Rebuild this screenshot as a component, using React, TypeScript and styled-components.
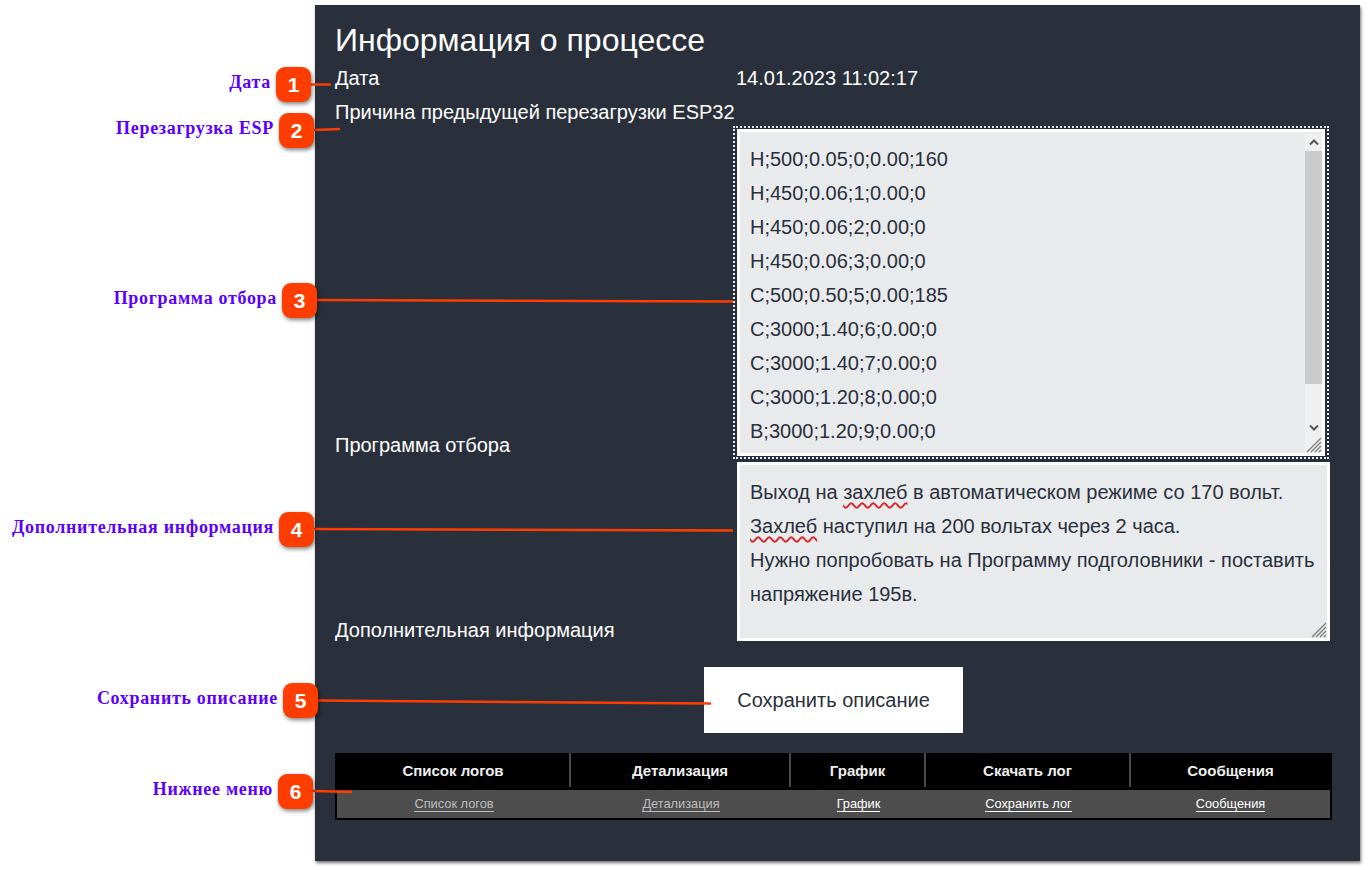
import styled, { createGlobalStyle } from 'styled-components';

const SANS = '"Liberation Sans", Arial, sans-serif';

const GlobalStyle = createGlobalStyle`
  html, body {
    margin: 0;
    padding: 0;
    background: #fff;
  }
  body {
    font-family: ${SANS};
  }
`;

const Page = styled.div`
  position: relative;
  width: 1368px;
  height: 870px;
  overflow: hidden;
  padding: 5px 8px 0 315px;
  box-sizing: border-box;
`;

const Panel = styled.main`
  height: 856px;
  background: #29303c;
  color: #fff;
  padding: 17px 28px 0 20px;
  box-sizing: border-box;
  box-shadow: 1px 2px 3px rgba(0, 0, 0, 0.55);
`;

const Title = styled.h1`
  margin: 0;
  height: 39px;
  font-size: 32px;
  line-height: 36px;
  font-weight: 400;
`;

const InfoGrid = styled.div`
  display: grid;
  grid-template-columns: 402px 593px;
`;

const Label = styled.div<{ $bottom?: number }>`
  font-size: 20px;
  line-height: 34px;
  align-self: ${(props) => (props.$bottom !== undefined ? 'end' : 'start')};
  margin-bottom: ${(props) => props.$bottom ?? 0}px;
  white-space: nowrap;
`;

const Value = styled.div`
  font-size: 20px;
  line-height: 34px;
  margin-left: -1px;
`;

const ProgramFrame = styled.div`
  width: 596px;
  height: 333px;
  margin: -3px 0 0 -4px;
  padding: 1px 2px;
  box-sizing: border-box;
  border: 2px dotted #e9ebed;
  display: flex;
`;

const FieldBox = styled.div<{ $height: number }>`
  display: flex;
  flex: 1;
  position: relative;
  height: ${(props) => props.$height}px;
  box-sizing: border-box;
  border: 3px solid #fff;
  background: #e8eaec;
  color: #2a303c;
  font-size: 20px;
  line-height: 34px;
`;

const NotesWrap = styled.div`
  margin: 3px 0 0 0;
  width: 593px;
`;

const FieldText = styled.div`
  flex: 1;
  padding: 10px 10px 0 10px;
  overflow: hidden;
`;

const FieldLine = styled.div`
  white-space: nowrap;
`;

const Misspelled = styled.span`
  text-decoration: underline wavy #d8232a 1.5px;
  text-underline-offset: 3px;
`;

const ScrollBar = styled.div`
  width: 17px;
  margin: 2px 0 0 0;
  background: #f0f0f0;
  display: flex;
  flex-direction: column;
  align-items: center;
`;

const ScrollArrow = styled.div`
  height: 17px;
  width: 17px;
  display: flex;
  align-items: center;
  justify-content: center;
`;

const ScrollThumb = styled.div`
  width: 17px;
  height: 233px;
  background: #cbcbcb;
`;

const ScrollSpacer = styled.div`
  flex: 1;
`;

const Grip = styled.svg`
  position: absolute;
  right: 0;
  bottom: 0;
`;

const ButtonRow = styled.div`
  display: flex;
  justify-content: center;
  margin-top: 26px;
`;

const SaveButton = styled.button`
  width: 259px;
  height: 66px;
  border: 0;
  background: #fff;
  color: #2a303c;
  font-family: ${SANS};
  font-size: 20px;
  padding: 0;
`;

const LogTable = styled.div`
  margin-top: 20px;
  width: 997px;
  height: 67px;
  box-sizing: border-box;
  background: #000;
  padding: 0 2px 2px 2px;
  display: grid;
  grid-template-columns: 234px 220px 135px 205px 199px;
  grid-template-rows: 37px 28px;
`;

const HeadCell = styled.div<{ $last?: boolean }>`
  display: flex;
  align-items: center;
  justify-content: center;
  height: 34px;
  padding-top: 1px;
  box-sizing: border-box;
  font-size: 15px;
  font-weight: 700;
  color: #eee;
  border-right: ${(props) => (props.$last ? '0' : '2px solid #4a4a4a')};
`;

const BodyCell = styled.div`
  background: #4d4d4d;
  display: flex;
  align-items: center;
  justify-content: center;
`;

const LogLink = styled.a<{ $visited?: boolean }>`
  font-size: 12.8px;
  line-height: 15px;
  color: ${(props) => (props.$visited ? '#bdbdbd' : '#fff')};
  border-bottom: 1px solid ${(props) => (props.$visited ? '#bdbdbd' : '#fff')};
  cursor: pointer;
`;

const Overlay = styled.svg`
  position: absolute;
  left: 0;
  top: 0;
  pointer-events: none;
`;

const Callout = styled.div<{ $top: number; $right: number }>`
  position: absolute;
  top: ${(props) => props.$top}px;
  right: ${(props) => 1368 - props.$right}px;
  display: flex;
  align-items: center;
  gap: 5px;
`;

const CalloutText = styled.span`
  font-family: "Liberation Serif", "Times New Roman", serif;
  font-weight: 700;
  font-size: 18px;
  letter-spacing: 0.68px;
  color: #5a00ff;
  margin-top: -5px;
  white-space: nowrap;
`;

const Badge = styled.span`
  width: 35px;
  height: 35px;
  border-radius: 9px;
  background: #ff3d00;
  color: #fff;
  font-size: 21px;
  font-weight: 700;
  display: flex;
  align-items: center;
  justify-content: center;
  box-shadow: 1px 2px 4px rgba(0, 0, 0, 0.5);
`;

const program = [
  'H;500;0.05;0;0.00;160',
  'H;450;0.06;1;0.00;0',
  'H;450;0.06;2;0.00;0',
  'H;450;0.06;3;0.00;0',
  'C;500;0.50;5;0.00;185',
  'C;3000;1.40;6;0.00;0',
  'C;3000;1.40;7;0.00;0',
  'C;3000;1.20;8;0.00;0',
  'B;3000;1.20;9;0.00;0',
];

const menu = [
  { head: 'Список логов', link: 'Список логов', visited: true },
  { head: 'Детализация', link: 'Детализация', visited: true },
  { head: 'График', link: 'График', visited: false },
  { head: 'Скачать лог', link: 'Сохранить лог', visited: false },
  { head: 'Сообщения', link: 'Сообщения', visited: false },
];

const callouts = [
  { n: 1, text: 'Дата', top: 67, right: 311, line: [311, 84.5, 331, 84.5] },
  { n: 2, text: 'Перезагрузка ESP', top: 113, right: 314, line: [314, 130, 340, 129] },
  { n: 3, text: 'Программа отбора', top: 283, right: 317, line: [317, 300, 733, 301.5] },
  { n: 4, text: 'Дополнительная информация', top: 512, right: 314, line: [314, 529, 733, 530.5] },
  { n: 5, text: 'Сохранить описание', top: 683, right: 318, line: [318, 700.5, 711, 703.5] },
  { n: 6, text: 'Нижнее меню', top: 774, right: 313, line: [313, 791, 352, 792] },
];

function ResizeGrip() {
  return (
    <Grip width="16" height="16" viewBox="0 0 16 16">
      <path d="M1 15L15 1M5 15L15 5M9 15L15 9M13 15L15 13" stroke="#7d7d7d" strokeWidth="1.3" fill="none" />
    </Grip>
  );
}

function Chevron({ up }: { up?: boolean }) {
  return (
    <svg width="10" height="7" viewBox="0 0 10 7">
      <path d={up ? 'M1 5.5L5 1.5L9 5.5' : 'M1 1.5L5 5.5L9 1.5'} stroke="#555" strokeWidth="2" fill="none" />
    </svg>
  );
}

export default function App() {
  return (
    <Page>
      <GlobalStyle />
      <Panel>
        <Title>Информация о процессе</Title>
        <InfoGrid>
          <Label>Дата</Label>
          <Value>14.01.2023 11:02:17</Value>
          <Label>Причина предыдущей перезагрузки ESP32</Label>
          <div />
          <Label $bottom={-3}>Программа отбора</Label>
          <ProgramFrame>
            <FieldBox $height={327}>
              <FieldText>
                {program.map((line) => (
                  <FieldLine key={line}>{line}</FieldLine>
                ))}
              </FieldText>
              <ScrollBar>
                <ScrollArrow>
                  <Chevron up />
                </ScrollArrow>
                <ScrollThumb />
                <ScrollSpacer />
                <ScrollArrow>
                  <Chevron />
                </ScrollArrow>
                <ScrollArrow />
              </ScrollBar>
              <ResizeGrip />
            </FieldBox>
          </ProgramFrame>
          <Label $bottom={-6}>Дополнительная информация</Label>
          <NotesWrap>
            <FieldBox $height={179}>
              <FieldText>
                <FieldLine>
                  Выход на <Misspelled>захлеб</Misspelled> в автоматическом режиме со 170 вольт.
                </FieldLine>
                <FieldLine>
                  <Misspelled>Захлеб</Misspelled> наступил на 200 вольтах через 2 часа.
                </FieldLine>
                <FieldLine>Нужно попробовать на Программу подголовники - поставить</FieldLine>
                <FieldLine>напряжение 195в.</FieldLine>
              </FieldText>
              <ResizeGrip />
            </FieldBox>
          </NotesWrap>
        </InfoGrid>
        <ButtonRow>
          <SaveButton>Сохранить описание</SaveButton>
        </ButtonRow>
        <LogTable>
          {menu.map((item, i) => (
            <HeadCell key={item.head} $last={i === menu.length - 1}>
              {item.head}
            </HeadCell>
          ))}
          {menu.map((item) => (
            <BodyCell key={item.link}>
              <LogLink $visited={item.visited}>{item.link}</LogLink>
            </BodyCell>
          ))}
        </LogTable>
      </Panel>
      <Overlay width="1368" height="870">
        {callouts.map((c) => (
          <line key={c.n} x1={c.line[0]} y1={c.line[1]} x2={c.line[2]} y2={c.line[3]} stroke="#ff3d00" strokeWidth="2.4" />
        ))}
      </Overlay>
      {callouts.map((c) => (
        <Callout key={c.n} $top={c.top} $right={c.right}>
          <CalloutText>{c.text}</CalloutText>
          <Badge>{c.n}</Badge>
        </Callout>
      ))}
    </Page>
  );
}
